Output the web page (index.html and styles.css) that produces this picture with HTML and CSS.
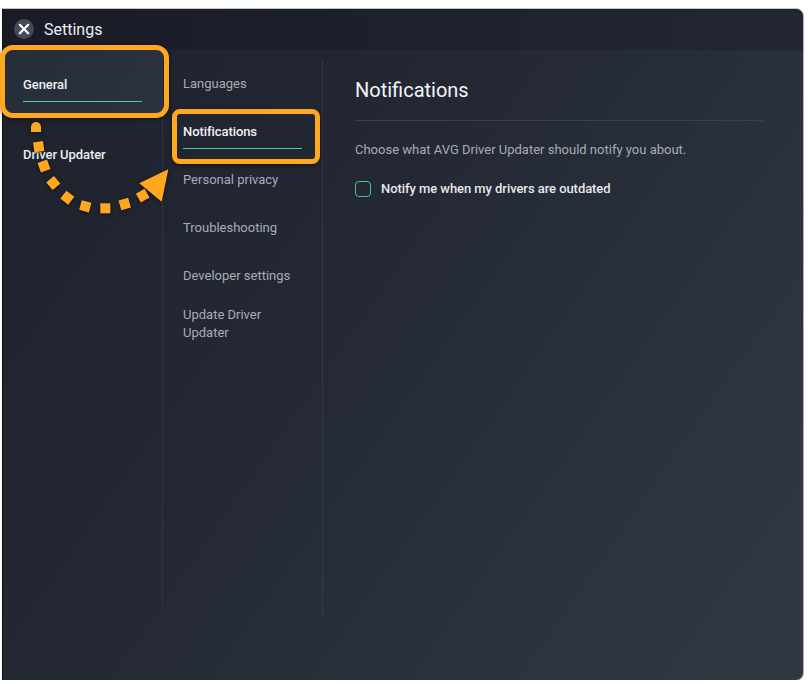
FILE: index.html
```html
<!DOCTYPE html>
<html lang="en">
<head>
<meta charset="utf-8">
<title>Settings</title>
<link rel="stylesheet" href="styles.css">
</head>
<body>
<div class="window">
  <header class="titlebar">
    <span class="close">
      <svg viewBox="0 0 20 20" width="20" height="20"><path d="M5.8 5.8l8.4 8.4M14.2 5.8l-8.4 8.4" class="close-x"/></svg>
    </span>
    <span class="title">Settings</span>
  </header>
  <div class="content">
    <nav class="side">
      <a class="side-item is-active"><span class="side-label">General</span></a>
      <a class="side-item"><span class="side-label">Driver Updater</span></a>
    </nav>
    <nav class="sub">
      <a class="sub-item">Languages</a>
      <a class="sub-item is-active">Notifications</a>
      <a class="sub-item">Personal privacy</a>
      <a class="sub-item">Troubleshooting</a>
      <a class="sub-item">Developer settings</a>
      <a class="sub-item sub-item-wrap">Update Driver Updater</a>
    </nav>
    <main class="main">
      <h1 class="heading">Notifications</h1>
      <p class="desc">Choose what AVG Driver Updater should notify you about.</p>
      <label class="check"><span class="box"></span><span>Notify me when my drivers are outdated</span></label>
    </main>
  </div>
  <div class="mark mark-general"></div>
  <div class="mark mark-notif"></div>
  <svg class="arrow" viewBox="0 0 180 100" width="180" height="100">
    <g class="arrow-fill">
      <path d="M31 132v-5a5 5 0 0 1 10 0v5z" transform="translate(0 -110)"/>
      <rect x="-5" y="-5" width="10" height="10" transform="translate(38.7 36.7) rotate(-8)"/>
      <rect x="-5" y="-5" width="10" height="10" transform="translate(44 56) rotate(-20)"/>
      <rect x="-5" y="-5" width="10" height="10" transform="translate(53.3 73) rotate(-40)"/>
      <rect x="-5" y="-5" width="10" height="10" transform="translate(67.3 87.7) rotate(-52)"/>
      <rect x="-5" y="-5" width="10" height="10" transform="translate(85.3 96.3) rotate(-75)"/>
      <rect x="-5" y="-5" width="10" height="10" transform="translate(105.3 98.3)"/>
      <rect x="-5" y="-5" width="10" height="10" transform="translate(124.7 94) rotate(-16)"/>
      <rect x="-5" y="-5" width="10" height="10" transform="translate(142.7 85.7) rotate(-30)"/>
      <path d="M168.3 59.3L139.3 73.3L161.7 91.7z"/>
    </g>
  </svg>
</div>
</body>
</html>
```
FILE: styles.css
```css
* { box-sizing: border-box; }
html, body { margin: 0; padding: 0; background: #fff; }
body { font-family: Roboto, "Liberation Sans", sans-serif; }

.window {
  position: relative;
  width: 801px;
  height: 671px;
  margin: 9px 0 0 2px;
  display: flex;
  flex-direction: column;
  border-left: 1px solid #0c0e12;
  border-radius: 0 7px 7px 0;
  background: linear-gradient(125deg, #1e222d 0%, #232834 40%, #2c323f 75%, #323744 100%);
  box-shadow: 0 -1px 0 #c4c4c4, 1px 0 0 #b4b4b4, 0 1px 0 #a8a8a8;
}

.titlebar {
  height: 41px;
  flex: none;
  display: flex;
  align-items: center;
  gap: 10px;
  padding: 0 0 1px 11px;
  border-radius: 0 7px 0 0;
  background: linear-gradient(90deg, #191c27 0%, #1d212c 50%, #222733 100%);
}
.close {
  width: 20px;
  height: 20px;
  border-radius: 50%;
  background: #464a57;
  display: block;
  flex: none;
}
.close svg { display: block; }
.close-x { stroke: #fff; stroke-width: 2.2; fill: none; stroke-linecap: round; }
.title { font-size: 16px; color: #eceef0; }

.content { flex: 1; display: flex; align-items: flex-start; min-height: 0; }

.side {
  width: 160px;
  height: 558px;
  flex: none;
  border-right: 1px solid #2d323e;
  font-size: 13px;
  font-weight: 500;
  letter-spacing: -0.07px;
  color: #eceef0;
}
.side-item { display: block; height: 65px; padding: 26px 20px 0; margin-bottom: 5px; }
.side-item.is-active { background: linear-gradient(120deg, #272c39, #2c3240); }
.side-label { display: block; line-height: 18px; height: 26px; border-bottom: 1px solid transparent; }
.is-active .side-label { border-bottom-color: #3fd68a; }

.sub {
  width: 160px;
  height: 558px;
  margin-top: 10px;
  flex: none;
  padding: 0 20px;
  border-right: 1px solid #323744;
  font-size: 13px;
  color: #a8acb4;
}
.sub-item { display: block; height: 48px; padding-top: 15px; line-height: 18px; }
.sub-item.is-active {
  color: #f0f1f3;
  font-weight: 500;
  letter-spacing: -0.07px;
}
.sub-item.is-active::after {
  content: "";
  display: block;
  height: 1px;
  margin-top: 7px;
  background: #3fd68a;
}
.sub-item-wrap { padding-top: 6px; height: auto; }

.main { flex: 1; padding: 0 40px 0 32px; }
.heading {
  margin: 0;
  height: 71px;
  padding-top: 26px;
  line-height: 28px;
  font-size: 20px;
  font-weight: 400;
  color: #f4f5f6;
  border-bottom: 1px solid #3a4050;
}
.desc { margin: 20px 0 0; font-size: 13px; line-height: 18px; color: #a8acb4; }
.check {
  display: flex;
  align-items: center;
  gap: 10px;
  margin-top: 21px;
  font-size: 13px;
  font-weight: 500;
  letter-spacing: -0.06px;
  line-height: 18px;
  color: #e6e8ea;
}
.box { width: 16px; height: 16px; border: 1px solid #3fc98a; border-radius: 4px; flex: none; }

.mark { position: absolute; border: 5px solid #ffa81f; box-shadow: 0 1px 5px rgba(0, 0, 0, .55); }
.mark-general { left: -3px; top: 36px; width: 169px; height: 73px; border-radius: 13px; }
.mark-notif { left: 169px; top: 100px; width: 148px; height: 55px; border-radius: 8px; }
.arrow { position: absolute; left: -3px; top: 101px; overflow: visible; filter: drop-shadow(0 1px 2px rgba(0, 0, 0, .5)); }
.arrow-fill { fill: #ffa81f; }
```
